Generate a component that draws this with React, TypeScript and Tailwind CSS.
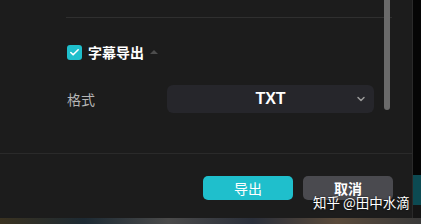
import { Check, ChevronDown } from "lucide-react"

const font = { fontFamily: '"Noto Sans CJK SC", "Noto Sans", sans-serif' }

export default function App() {
  return (
    <div className="relative w-[421px] h-[224px] overflow-hidden bg-black flex flex-col" style={font}>
      <div className="flex h-[218px]">
        <div className="relative w-[413px] h-full bg-[#1c1c1c] border-r border-[#2a2a2a] flex flex-col">
          {/* scroll area */}
          <div className="h-[153px] pl-[66px] pr-[20px] flex flex-col">
            <div className="mt-[17px] h-px bg-[#2f2f2f]" />
            <div className="mt-[26px] flex items-center h-[16px] pl-px">
              <span className="w-[15px] h-[15px] rounded-[3px] bg-[#1fbfcc] flex items-center justify-center">
                <Check size={11} strokeWidth={3.5} className="text-white" />
              </span>
              <span className="ml-[6px] text-[14px] leading-none font-bold text-white">字幕导出</span>
              <span className="ml-[6px] w-0 h-0 border-l-[4px] border-r-[4px] border-b-[4px] border-l-transparent border-r-transparent border-b-[#4d4d4d]" />
            </div>
            <div className="mt-[25px] flex items-center pl-px">
              <span className="w-[100px] text-[14px] leading-none text-[#b5b5b5]">格式</span>
              <div className="w-[207px] h-[28px] rounded-[6px] bg-[#26262b] flex items-center relative">
                <span className="flex-1 text-center text-[16px] font-bold text-white leading-none" style={{ fontFamily: '"Liberation Sans", sans-serif' }}>TXT</span>
                <ChevronDown size={12} strokeWidth={3} className="absolute right-[7px] text-[#9a9a9a]" />
              </div>
            </div>
          </div>
          <div className="absolute left-[384px] top-0 w-[6px] h-[110px] rounded-b-full bg-[#6a6a6a]" />
          <div className="h-px bg-[#2a2a2a]" />
          <div className="flex justify-end gap-[10px] pr-[19px] pt-[22px]">
            <button className="w-[90px] h-[24px] rounded-[5px] bg-[#1fbfcc] text-white text-[14px] leading-none">导出</button>
            <button className="w-[90px] h-[24px] rounded-[5px] bg-[#4a4a4f] text-white text-[14px] font-bold leading-none">取消</button>
          </div>
        </div>
        <div className="flex-1 flex flex-col">
          <div className="h-[175px] bg-[#050505]" />
          <div className="h-[30px] bg-[#0c4a52]" />
          <div className="flex-1 bg-[#151515]" />
        </div>
      </div>
      <div className="flex-1 bg-[linear-gradient(90deg,#3a3220_0%,#1d2a33_20%,#4a4a4a_40%,#2a2f3a_60%,#5a4a3a_80%,#3a3a3a_100%)]" />
      <div className="absolute left-[313px] top-[196px] text-[13.5px] leading-none text-white whitespace-nowrap [text-shadow:0_0_2px_rgba(0,0,0,0.8)]">知乎 @田中水滴</div>
    </div>
  )
}
